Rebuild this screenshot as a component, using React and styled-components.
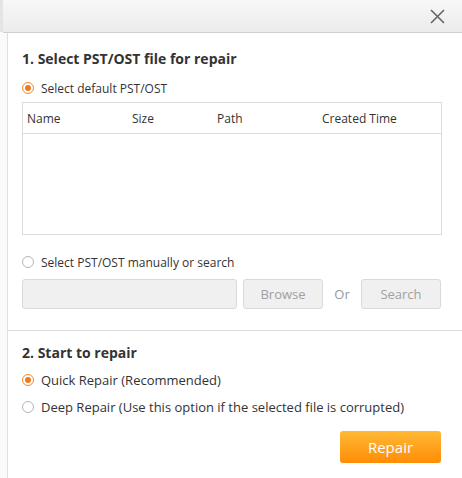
import React, { useState } from 'react';
import styled, { createGlobalStyle } from 'styled-components';

const GlobalStyle = createGlobalStyle`
  html, body {
    margin: 0;
    padding: 0;
    background: #fafafa;
  }
  body {
    font-family: "Open Sans", "Noto Sans", Arial, sans-serif;
    color: #333;
  }
`;

const Page = styled.div`
  display: flex;
  width: 462px;
  height: 478px;
  overflow: hidden;
`;

const Backdrop = styled.div`
  width: 7px;
  flex-shrink: 0;
  background: linear-gradient(#e4e4e4 0, #e4e4e4 32px, #fafafa 32px);
`;

const Dialog = styled.div`
  flex: 1;
  display: flex;
  flex-direction: column;
  background: #fff;
  border-left: 1px solid #dedede;
`;

const Header = styled.div`
  height: 32px;
  display: flex;
  justify-content: flex-end;
  align-items: center;
  padding-right: 16px;
  background: linear-gradient(#f7f7f7, #ececec);
  border-bottom: 1px solid #cfcfcf;
  margin-left: -5px;
`;

const CloseButton = styled.button`
  width: 18px;
  height: 18px;
  padding: 0;
  border: none;
  background: none;
  display: flex;
  align-items: center;
  justify-content: center;
  cursor: pointer;
`;

const Section = styled.div`
  padding: ${p => p.$pad || '16px 20px 0 14px'};
  display: flex;
  flex-direction: column;
`;

const Title = styled.h3`
  margin: 0 0 ${p => p.$mb ?? 9}px;
  font-size: 14px;
  font-weight: 700;
  color: #333;
  line-height: 20px;
`;

const RadioRow = styled.label`
  display: flex;
  align-items: center;
  gap: 7px;
  height: ${p => p.$h || 20}px;
  font-size: ${p => p.$size || 12}px;
  color: #333;
  cursor: pointer;
`;

const RadioDot = styled.span`
  width: 12px;
  height: 12px;
  border-radius: 50%;
  box-sizing: border-box;
  border: 1px solid ${p => (p.$checked ? '#f08a2c' : '#b5b5b5')};
  background: #fff;
  display: flex;
  align-items: center;
  justify-content: center;
  flex-shrink: 0;

  &::after {
    content: '';
    width: 6px;
    height: 6px;
    border-radius: 50%;
    background: ${p => (p.$checked ? '#f07a1a' : 'transparent')};
  }
`;

const Table = styled.div`
  margin-top: 4px;
  height: 133px;
  border: 1px solid #dcdcdc;
  box-sizing: border-box;
`;

const TableHead = styled.div`
  display: grid;
  grid-template-columns: 105px 85px 105px 1fr;
  height: 30px;
  align-items: center;
  padding-left: 4px;
  border-bottom: 1px solid #dcdcdc;
  font-size: 12px;
  color: #333;
`;

const Spacer = styled.div`
  height: ${p => p.$h}px;
`;

const ManualRow = styled.div`
  display: flex;
  align-items: center;
  margin-top: 7px;
  height: 30px;
`;

const PathInput = styled.input`
  width: 215px;
  height: 30px;
  box-sizing: border-box;
  border: 1px solid #dadada;
  border-radius: 3px;
  background: #f0f0f0;
  margin-right: 6px;
`;

const GreyButton = styled.button`
  width: 80px;
  height: 30px;
  box-sizing: border-box;
  border: 1px solid #dadada;
  border-radius: 3px;
  background: #f0f0f0;
  color: #a0a0a0;
  font-family: inherit;
  font-size: 13px;
  padding: 0;
`;

const OrText = styled.span`
  width: 38px;
  text-align: center;
  font-size: 13px;
  color: #999;
`;

const Divider = styled.div`
  height: 1px;
  background: #dcdcdc;
  margin-top: 21px;
`;

const Footer = styled.div`
  display: flex;
  justify-content: flex-end;
  padding: 11px 21px 0 0;
`;

const RepairButton = styled.button`
  width: 101px;
  height: 32px;
  border: none;
  border-radius: 3px;
  background: linear-gradient(#ffb936, #ff8d06);
  color: #fff;
  font-family: inherit;
  font-size: 15px;
  padding: 0;
  cursor: pointer;
`;

const Radio = ({ checked, children, size, h, onClick }) => (
  <RadioRow $size={size} $h={h} onClick={onClick}>
    <RadioDot $checked={checked} />
    <span>{children}</span>
  </RadioRow>
);

const App = () => {
  const [source, setSource] = useState('default');
  const [mode, setMode] = useState('quick');

  return (
    <Page>
      <GlobalStyle />
      <Backdrop />
      <Dialog>
        <Header>
          <CloseButton aria-label="Close">
            <svg width="15" height="15" viewBox="0 0 15 15">
              <path d="M1 1 L14 14 M14 1 L1 14" stroke="#666" strokeWidth="1.6" />
            </svg>
          </CloseButton>
        </Header>

        <Section>
          <Title>1. Select PST/OST file for repair</Title>
          <Radio checked={source === 'default'} onClick={() => setSource('default')}>
            Select default PST/OST
          </Radio>
          <Table>
            <TableHead>
              <span>Name</span>
              <span>Size</span>
              <span>Path</span>
              <span>Created Time</span>
            </TableHead>
          </Table>
          <Spacer $h={17} />
          <Radio checked={source === 'manual'} onClick={() => setSource('manual')}>
            Select PST/OST manually or search
          </Radio>
          <ManualRow>
            <PathInput disabled />
            <GreyButton disabled>Browse</GreyButton>
            <OrText>Or</OrText>
            <GreyButton disabled>Search</GreyButton>
          </ManualRow>
        </Section>

        <Divider />

        <Section $pad="12px 20px 0 14px">
          <Title $mb={3}>2. Start to repair</Title>
          <Radio size={13} h={27} checked={mode === 'quick'} onClick={() => setMode('quick')}>
            Quick Repair (Recommended)
          </Radio>
          <Radio size={13} h={27} checked={mode === 'deep'} onClick={() => setMode('deep')}>
            Deep Repair (Use this option if the selected file is corrupted)
          </Radio>
        </Section>

        <Footer>
          <RepairButton>Repair</RepairButton>
        </Footer>
      </Dialog>
    </Page>
  );
};

export default App;
